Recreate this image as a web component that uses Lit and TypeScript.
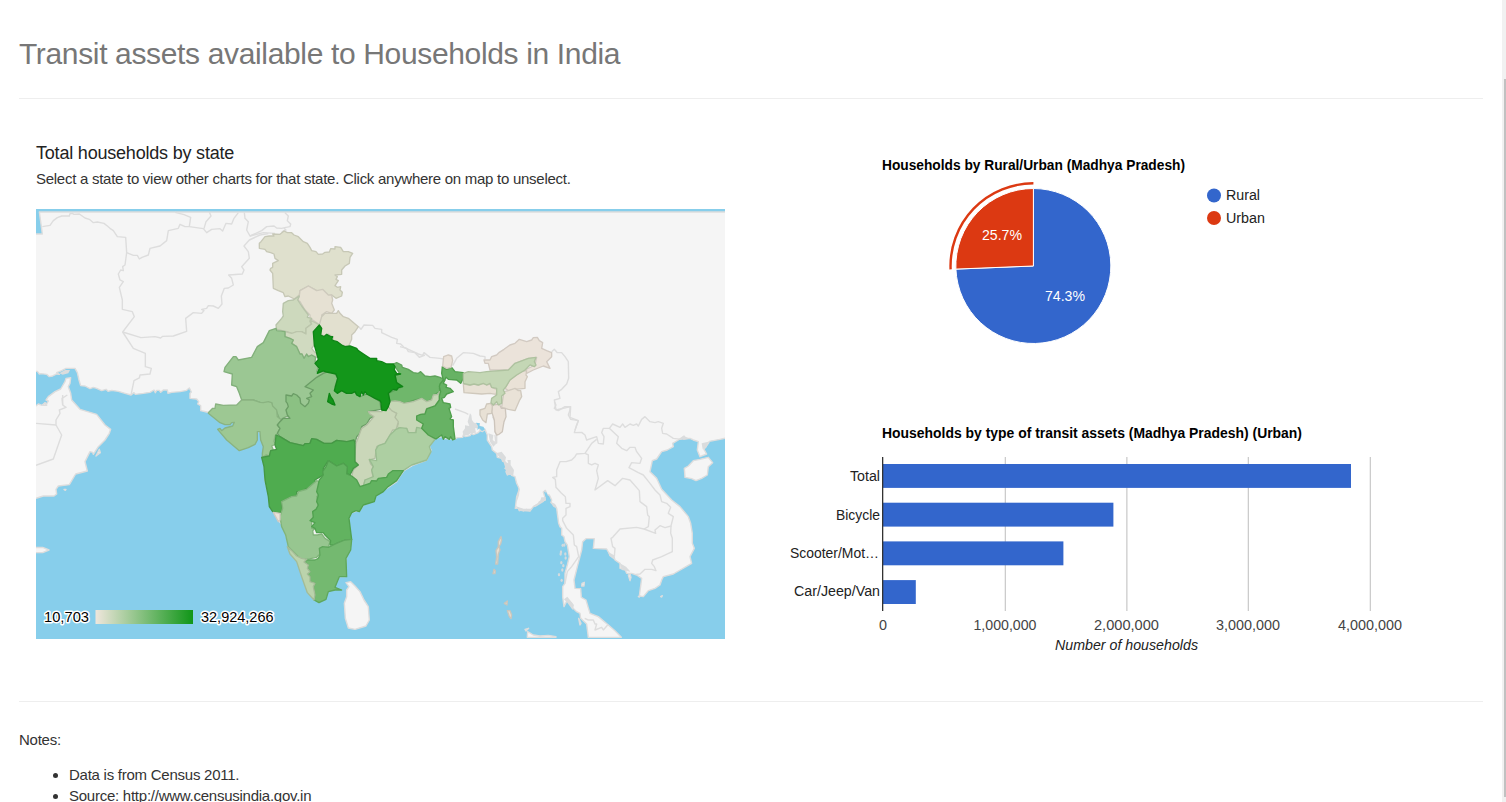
import { LitElement, html, svg, css } from "lit";
import { customElement } from "lit/decorators.js";

// Survey sheets the outlines are recorded on: each has its own origin, in map units (3 per pixel).
const SHEETS: Record<string, [number, number]> = {
  A: [90, 600],
  T: [600, 600],
  N: [600, 660],
  E: [1200, 960],
  S: [600, 1200],
  I: [1440, 1200],
  W: [90, 1200],
};

// "N 10,20 30,40 S 5,6" -> polyline path data; a letter switches the sheet.
function outline(src: string, close = false): string {
  let origin = SHEETS.A;
  const pts: string[] = [];
  for (const token of src.trim().split(/\s+/)) {
    if (SHEETS[token]) {
      origin = SHEETS[token];
      continue;
    }
    const [x, y] = token.split(",").map(Number);
    pts.push(`${x + origin[0]} ${y + origin[1]}`);
  }
  return "M" + pts.join("L") + (close ? "Z" : "");
}

const LAND = [
  // Eurasian mainland
  `A 28,36 37,102 10,102 10,514 22,514 28,522 34,521 50,523 58,530 68,528 80,522 88,523 80,518 95,512 108,505 135,505 142,518 147,540 152,557 165,558 180,566 190,562 200,565 215,572 228,568 234,574 245,571 265,574 285,580 303,585 312,578 316,583 340,580 360,577 372,570 376,578 380,571 388,571 392,577 400,570 412,570 414,580 425,577 450,575 470,571 478,564 482,572 484,576 480,580 480,595 500,597 506,605 503,612 512,617 512,632 530,636 545,640
   S 60,60 100,60 120,75 100,90 120,140 160,125 170,95 180,95 192,140 195,240 215,320 235,360 250,380 268,440 300,490 330,575 357,600 378,590 385,570 405,555 418,530 435,530 438,475 450,450 450,418 447,350 455,338 480,330 490,315 520,303 528,285 560,265 590,245 600,228 612,212 640,195 680,180 693,150 688,140
   E 95,362 105,355 127,350 135,356 165,357 172,353 188,352 190,345 196,350 210,347 215,340 220,344 235,338 240,332 247,335 255,328 262,345 262,360 275,380 277,390 290,400 292,412 305,415 308,424 315,425 322,440 315,445 325,450 318,455 322,465 332,460 335,466 345,470 350,490 357,505 355,525 350,540
   I 118,268 110,290 106,325 115,325 118,332 125,327 130,333 140,328 150,333 160,320 175,312 178,305 196,300 194,290 190,276 196,271 202,285 208,285 215,300 213,308 225,315 230,325 236,370 240,380 245,385 245,405 252,410 255,425 262,435 268,470 262,495 255,520 255,550 248,560 248,590 252,620 262,600 275,610 275,620 290,635 300,640 302,655 320,672 325,712 424,712 405,692 385,675 355,650 330,640 318,600 304,592 302,566 285,565 282,540 292,500 305,450 308,425 318,416 343,416 340,445 380,447 390,465 402,470 405,480 420,490 420,505 435,508 440,520 455,520 470,525 485,535 478,588 490,590 505,572 525,565 540,555 545,540 550,530 580,522 635,490 630,470 643,445 637,430 637,400 632,370 625,350 600,320 575,300 545,268 530,235 517,222 510,215 517,182 530,177 545,155 562,150 580,140 578,130 595,120 612,108 615,116 630,115 640,120 655,125 652,150 660,170 680,162 672,148 685,130 688,124 720,118 745,113 T 1585,36`,
  // Arabian peninsula
  `A 10,624 25,612 36,616 45,608 50,612 55,603 48,600 55,590 75,575 92,567 105,545 108,535 122,533 120,550 115,560 122,580 W 125,0 150,28 200,43 225,75 242,88 238,100 225,120 205,140 190,163 188,157 180,155 165,185 172,213 137,222 118,254 85,258 78,268 80,282 72,288 40,288 18,295 10,297`,
  // Islands
  "S 438,548 452,545 465,558 480,575 492,600 505,620 508,660 498,678 465,688 445,684 436,655 433,610 440,590 440,570 447,560",
  "I 613,205 625,198 640,182 660,178 685,172 698,188 685,200 682,225 665,235 648,242 635,236 615,232",
  "I 143,695 160,705 180,708 205,706 228,710 228,712 142,712",
  "W 10,443 38,442 57,450 38,458 10,458",
  "W 198,168 208,148 211,158",
  "W 102,268 108,268 106,271",
  "A 38,616 44,610 50,616",
  "I 445,525 450,522 453,532 450,542",
  "I 306,550 313,547 312,558 305,558",
  "I 475,590 480,588 478,591",
  "I 542,590 547,587 545,591",
  "I 296,655 303,670 300,675",
  "I 135,688 146,685 138,693",
];

// River deltas and broken shoreline
const DELTAS = [
  "E 210,280 214,285 216,300 222,308 232,310 250,325 240,332 236,325 225,325 228,338 212,340 205,345 190,347 188,335 195,325 195,316 208,318 203,305",
  "E 288,400 305,395 318,412 315,425 325,430 322,420 332,420 332,435 342,450 340,465 322,465 318,455 315,440 310,425",
  "E 265,340 280,345 278,360 290,370 280,380 270,365",
  "I 106,318 130,326 155,326 150,335 118,333",
  "I 160,318 180,305 184,292 198,292 192,305 165,322",
  "I 598,118 612,108 630,116 612,120",
  "I 665,130 685,125 680,142 668,148",
  "I 210,305 225,312 228,325 220,320",
  "A 88,520 105,510 120,510 115,520 98,524",
  "I 384,455 402,466 404,480 388,468",
  "I 420,490 438,500 452,515 425,510",
  "I 252,598 262,590 282,615 278,630 262,608",
];

const ISLETS = [
  [243, 456], [248, 436], [244, 488], [257, 474], [250, 497], [237, 524], [247, 510], [245, 541], [256, 462], [242, 462], [253, 435],
];

const BORDERS = [
  "A 37,80 60,76 70,62 82,53 95,48 118,48 120,41 127,40 132,43 148,42 165,54 178,58 190,68 202,66 222,70 232,78 240,85 250,92 262,110 287,112 290,158 310,166 322,166 328,177 336,172 355,165 360,145 390,138 410,122 415,92 445,85 450,73 465,80 478,80 520,86 530,98 545,88 570,86 578,93 588,70 605,72 612,55 625,38",
  "A 478,80 482,52 462,44 436,37",
  "A 522,86 528,65 543,48 538,36",
  "A 290,158 285,195 278,200 280,212 272,210 265,222 270,240 280,245 268,262 277,300 277,328 307,335 313,350 278,396 333,413 375,410 392,414 398,409 430,408 470,394 467,355 490,338 515,340 522,332 515,328 530,325 535,317 550,318 565,325 576,312 574,288 583,265 595,264 610,255 605,235 596,225 637,222 642,210 635,200 658,175 655,155 642,138 658,120 690,105 715,101",
  "A 278,396 310,445 346,460 346,500 364,505 360,522 330,525 328,534 312,542 303,585",
  "T 133,38 135,55 145,65 140,90 150,108 185,92 200,80 222,78 230,84 245,85 258,82 270,80 272,72 262,62 265,48 255,38",
  "T 245,96 258,90 252,85",
  "T 150,108 190,98 225,100",
  "A 98,585 98,600 W 98,15 108,22 88,30 90,40 78,60 78,75 95,105 70,177 18,196",
  "W 98,15 96,-5 112,-15",
  "W 18,70 78,75",
  "N 476,320 483,328 492,315 518,316 525,325 545,328 545,338 575,352 592,358 590,370 602,372 612,382 655,402 668,406 672,398 690,412 720,415 E 130,117",
  "E 0,80 20,85 25,95 45,98 58,112 75,105",
  "E 158,137 170,115 190,98 220,100 240,108 255,110 255,118",
  "E 455,95 463,88 472,98 485,98 495,110 505,125 506,175 500,192 485,208 475,215 480,235 463,240 468,270 512,260 510,292 535,302 525,330",
  "I 223,5 228,15 223,25 235,32 255,20 270,20 270,30 265,45 272,58 295,62 290,75 283,98 305,97 315,105 320,120 350,110 355,130 370,132 372,110 365,98 370,85 388,85 398,72 420,82 428,72 435,82 450,72 460,76 470,72 475,78 480,68 485,58 495,50 510,65 525,68 535,65 550,70 545,85 548,100 560,102 580,115 605,118",
  "E 165,267 195,278 205,283",
  "E 278,290 288,310 285,335 290,345 290,370",
  "I 45,105 48,130 35,122",
  "I 350,118 335,130 315,160 290,162 285,170 275,180 258,185 240,185 230,210 230,230 218,232 226,238 228,262 243,278 256,290 258,310 270,310 270,320 258,325 258,345 248,355 248,362 260,385 280,405 283,435 290,440 296,470 275,500 262,515 255,550",
  "I 315,160 325,165 325,190 335,195 345,190 355,195 350,212 355,235 345,270 383,242 405,257 428,235 450,240 478,272 480,305 500,320 503,345 508,350 505,380 492,387",
  "I 388,85 415,110 410,130 425,145 440,152 450,142 465,142 470,155 485,175 480,190 455,188 447,203 475,218 490,225 510,250 525,270 540,285 545,305 560,310 572,322 565,340 580,350 573,378 555,383 540,377 525,390 527,400 492,387 470,382 420,387 398,412 393,415 398,440 405,445 403,470",
  "I 573,378 572,400 577,415 577,455 545,470 518,480 515,490 523,500 528,512 515,508 495,508 480,522 468,523",
  "I 314,655 325,660 340,660 345,672 350,672 345,690 365,682 370,690 383,675",
];

type Region = { name: string; fill: string; edge: string; d: string };

const STATES: Region[] = [
  { name: "Jammu and Kashmir", fill: "#dfe0cd", edge: "#c7c8b6", d: "N 178,70 183,65 195,50 208,48 222,48 218,42 240,43 252,33 262,38 275,38 282,45 295,50 310,65 322,70 330,82 335,92 348,95 355,103 368,102 375,97 388,96 392,86 405,87 405,80 422,82 430,95 445,95 458,100 450,112 448,130 435,138 425,150 425,163 405,165 412,170 408,178 415,182 405,197 412,202 422,200 420,210 427,217 425,228 408,235 395,225 385,228 368,212 350,212 325,198 300,212 298,225 283,237 265,228 255,230 250,218 235,212 220,205 218,160 210,150 212,145 218,142 218,130 235,122 225,115 222,102 212,98 200,95 195,88 178,85" },
  { name: "Himachal Pradesh", fill: "#e6e1d3", edge: "#cecabd", d: "N 300,212 325,198 350,212 368,208 385,225 395,225 398,240 395,250 403,270 395,280 380,275 365,285 368,298 360,315 345,305 330,295 330,285 315,270 300,245 293,240 298,228" },
  { name: "Punjab", fill: "#cdd9bd", edge: "#b7c3a9", d: "N 250,250 265,242 280,240 298,228 293,240 305,258 325,285 322,292 335,295 330,305 335,312 318,325 318,342 305,335 290,335 280,342 260,335 230,328 228,315 245,295 250,288 248,275" },
  { name: "Haryana", fill: "#d0dac0", edge: "#bbc5ab", d: "N 255,335 275,340 290,335 305,335 318,342 318,325 335,312 330,300 350,310 358,315 340,335 343,375 335,385 345,398 350,400 350,412 335,405 325,410 320,402 312,415 306,402 300,402 290,380 275,370 280,360 270,355 255,350" },
  { name: "Rajasthan", fill: "#9bc793", edge: "#82b07b", d: "N 208,332 228,325 230,332 255,335 255,350 270,355 280,360 275,370 290,380 300,402 306,402 312,415 320,402 325,410 335,405 347,412 345,425 355,440 350,455 380,458 360,475 345,500 355,530 335,570 290,575 275,590 258,590 240,600 230,575 220,572 215,548 200,550 190,552 180,547 160,540 125,540 118,520 110,500 95,495 97,462 72,455 75,442 100,410 108,410 115,420 155,412 172,380 190,368" },
  { name: "Gujarat", fill: "#9dc893", edge: "#8ab381", d: "N 25,578 38,565 45,565 47,552 70,556 110,555 125,540 160,540 180,547 190,548 205,545 215,548 218,558 230,570 232,590 245,600 232,615 240,625 S 232,102 225,108 222,125 228,132 215,138 220,150 212,152 208,168 198,165 187,172 187,160 190,140 182,120 180,95 172,95 172,120 165,133 145,143 118,152 80,120 53,88 60,85 65,92 75,84 98,78 103,67 95,68 90,74 75,74 60,68 25,40" },
  { name: "Madhya Pradesh", fill: "#8bc183", edge: "#6b9d66", d: "N 315,500 350,472 370,460 385,455 405,460 413,475 405,500 410,515 425,512 440,520 465,515 480,530 500,522 525,535 540,545 543,568 505,575 522,590 510,595 500,612 485,620 480,640 470,650 465,670 S 440,125 410,121 395,130 372,130 350,118 335,116 330,130 315,131 310,137 270,128 240,110 232,100 240,85 232,75 240,65 N 250,595 270,595 262,585 258,570 265,560 262,550 258,545 258,525 275,528 280,521 290,525 300,535 302,550 315,560 325,550 328,540 320,535 335,530 330,520 340,510" },
  { name: "Uttarakhand", fill: "#e2e0cf", edge: "#cac8b9", d: "N 365,290 375,280 410,280 415,272 420,280 430,290 445,295 475,320 465,335 455,345 455,358 445,380 425,375 400,360 398,350 385,342 370,348 362,340 365,325 358,315" },
  { name: "Bihar", fill: "#6fb76b", edge: "#5fa35b", d: "N 580,432 590,428 605,435 607,442 625,448 640,458 655,460 662,455 675,468 690,470 705,468 720,472 E 135,180 118,205 120,215 100,225 95,238 80,245 65,235 45,240 15,250 N 600,545 570,545 565,520 608,500 590,488 585,465 600,462" },
  { name: "Jharkhand", fill: "#c6d7b6", edge: "#b0c1a1", d: "N 570,545 585,543 600,545 612,550 640,545 665,535 680,545 695,540 700,525 715,523 718,515 E 118,215 118,240 105,258 80,265 75,280 50,288 55,302 70,310 68,320 82,332 65,328 50,325 45,340 25,338 20,325 0,328 N 592,620 595,610 583,602 585,592 590,580 575,575 562,558" },
  { name: "Chhattisgarh", fill: "#cad7b9", edge: "#b3bfa3", d: "S 505,35 545,35 562,18 575,32 590,40 585,52 595,65 588,90 578,90 570,105 555,130 530,140 525,175 508,180 512,192 520,200 515,210 520,235 495,240 490,258 478,260 470,240 455,228 460,210 475,195 463,180 468,130 472,120 485,85 500,75 522,50 510,42" },
  { name: "Odisha", fill: "#adcfa2", edge: "#9abd90", d: "S 588,88 600,83 620,85 625,98 648,98 650,82 665,85 685,90 685,105 705,118 688,140 693,155 680,180 635,195 605,215 580,212 560,232 530,240 510,250 490,260 495,240 520,230 515,210 520,200 508,178 530,182 527,150 535,137 555,130 570,105" },
  { name: "West Bengal", fill: "#67b264", edge: "#4f9f4c", d: "E 127,140 140,148 155,142 165,155 190,158 190,175 182,190 170,180 145,178 138,172 130,190 140,195 138,202 150,205 160,215 140,222 133,232 125,235 130,248 150,252 152,262 147,265 155,290 150,297 160,300 160,320 165,357 158,360 152,350 148,358 135,350 130,358 125,345 108,357 85,345 65,325 70,312 50,300 50,288 62,283 75,282 80,267 105,258 118,240 118,228 122,215 118,200 120,192 130,180 125,160" },
  { name: "Maharashtra", fill: "#4fac4f", edge: "#459845", d: "S 228,105 240,110 270,128 310,137 315,131 330,130 335,116 350,118 372,130 395,130 410,121 440,125 462,120 465,130 465,165 465,185 475,195 460,205 450,225 440,220 442,200 430,190 410,198 385,182 370,205 370,225 345,240 345,250 335,260 315,268 315,275 290,275 290,288 275,290 255,300 245,305 245,318 248,325 245,335 235,340 218,335 208,320 205,290 195,240 192,200 185,172 208,168 212,152 230,148 225,135" },
  { name: "Karnataka", fill: "#97c690", edge: "#81b47a", d: "S 350,242 358,245 355,265 358,285 350,290 352,305 355,325 338,335 342,345 335,365 335,385 345,385 338,392 340,405 352,405 365,402 375,415 390,425 385,440 360,445 360,462 350,472 320,478 300,475 265,440 257,405 245,380 240,350 248,325 245,305 275,290 290,288 295,275 320,268" },
  { name: "Andhra Pradesh", fill: "#62b360", edge: "#50a14f", d: "S 385,182 410,198 430,190 442,200 440,222 455,228 470,240 480,260 510,250 515,242 530,243 535,235 560,232 565,222 578,212 610,212 590,242 562,262 550,275 528,288 523,305 490,315 478,335 468,332 455,338 447,355 455,418 435,420 415,428 400,435 390,435 392,422 375,405 370,398 350,398 345,385 335,380 345,368 330,362 340,352 338,335 348,328 355,315 350,305 355,285 350,275 358,240 370,225 368,215 378,200" },
  { name: "Tamil Nadu", fill: "#74b970", edge: "#5ea75c", d: "S 455,418 452,450 438,475 440,530 418,530 405,562 425,570 405,570 385,575 378,598 357,608 342,600 345,585 340,560 345,550 330,545 330,530 322,522 330,515 322,505 325,495 312,485 325,480 345,480 355,475 360,465 358,445 368,440 385,442 400,435 415,428 435,420" },
  { name: "Kerala", fill: "#bbd3ac", edge: "#a4bc97", d: "S 262,440 275,452 290,468 305,475 320,478 312,486 325,495 322,505 330,515 322,522 330,530 330,545 345,550 340,560 345,585 342,600 322,578 305,530 290,485 270,462" },
  { name: "Goa", fill: "#ece3d9", edge: "#d2cac1", d: "S 220,337 240,340 240,360 235,365" },
  { name: "Sikkim", fill: "#ece3d9", edge: "#d3cbc1", d: "E 131,110 145,105 155,108 158,122 153,142 140,145 128,138" },
  { name: "Arunachal Pradesh", fill: "#ebe3da", edge: "#d2cac2", d: "E 252,120 270,120 275,110 290,105 298,97 312,88 330,75 345,70 358,58 380,65 395,60 400,53 412,52 418,62 428,68 425,85 440,92 455,98 455,110 440,125 450,145 430,138 400,150 380,160 375,150 405,135 410,112 385,115 345,130 325,150 270,150 265,130 255,130" },
  { name: "Nagaland", fill: "#eae2d7", edge: "#d1c9be", d: "E 380,152 378,165 382,170 375,185 375,205 345,208 325,212 315,205 330,180 350,165 365,155" },
  { name: "Manipur", fill: "#e9e2d7", edge: "#d0c9be", d: "E 325,212 345,205 355,212 362,212 365,230 358,242 345,272 325,268 305,262 308,240 312,215" },
  { name: "Mizoram", fill: "#ebe3da", edge: "#cdc5bc", d: "E 278,255 298,252 304,265 316,265 318,290 312,305 307,335 297,343 290,345 285,335 283,300 275,275" },
  { name: "Tripura", fill: "#e8e1d5", edge: "#cfc8bd", d: "E 240,270 255,265 260,252 272,250 277,258 275,280 262,282 258,308 248,300 240,285" },
  { name: "Meghalaya", fill: "#e8e1d5", edge: "#cfc8bc", d: "E 190,192 210,195 222,192 235,195 250,190 260,195 270,192 275,202 290,208 290,215 288,223 270,220 245,222 192,218" },
  { name: "Assam", fill: "#c4d7b5", edge: "#aec29f", d: "E 190,160 205,155 240,158 260,155 325,150 345,130 385,115 408,112 403,125 408,135 403,140 390,135 375,150 350,165 330,180 318,200 310,210 315,220 305,228 305,250 295,255 290,245 280,255 273,248 275,235 290,225 290,205 275,202 270,190 260,195 250,190 235,195 222,192 210,195 190,190" },
  { name: "Uttar Pradesh", fill: "#13961a", edge: "#0e8515", d: "N 358,315 365,325 362,345 372,350 380,343 392,350 398,350 395,358 400,362 412,365 425,375 435,380 450,378 470,385 475,392 495,405 510,415 530,415 530,422 545,425 560,432 580,432 585,440 583,450 590,460 602,462 585,465 590,488 608,500 595,503 590,510 580,508 565,520 570,545 565,560 558,572 545,570 543,548 540,542 525,535 512,528 500,522 495,515 490,525 485,515 480,530 470,525 465,515 455,520 440,520 425,512 412,520 403,512 413,475 408,462 380,456 370,453 352,460 358,445 345,430 355,418 350,400 343,375 340,335" },
  { name: "Lalitpur", fill: "#13961a", edge: "#0e8515", d: "N 388,520 392,530 398,538 405,555 395,552 383,545 385,535" },
  { name: "Andaman", fill: "#e6ded0", edge: "#c9c6bd", d: "I 63,410 65,420 62,432 57,440 60,450 55,462 53,492 47,492 50,470 48,452 55,440 55,425" },
  { name: "Little Andaman", fill: "#e6ded0", edge: "#c9c6bd", d: "I 42,508 46,512 45,521 39,521" },
  { name: "Nicobar", fill: "#e6ded0", edge: "#c9c6bd", d: "I 82,632 90,632 95,645 93,656 88,650" },
  { name: "Katchal", fill: "#e6ded0", edge: "#c9c6bd", d: "I 73,610 82,603 81,615" },
];

const BARS = [
  { label: "Total", x: 850, len: 30, y: 464, end: 1351, ty: 481 },
  { label: "Bicycle", x: 836, len: 44, y: 502.7, end: 1113.4, ty: 520 },
  { label: "Scooter/Mot…", x: 790, len: 89, y: 541.4, end: 1063.4, ty: 558 },
  { label: "Car/Jeep/Van", x: 794, len: 86, y: 580.1, end: 915.8, ty: 596 },
];

const TICKS = [
  { label: "0", x: 883, len: 8 },
  { label: "1,000,000", x: 1005, len: 63 },
  { label: "2,000,000", x: 1126.5, len: 65 },
  { label: "3,000,000", x: 1248, len: 64 },
  { label: "4,000,000", x: 1370, len: 64 },
];

@customElement("households-map")
export class HouseholdsMap extends LitElement {
  static styles = css`
    :host { display: block; width: 689px; height: 430px; }
    svg { display: block; }
    .land { fill: #f5f5f5; stroke: #dddddd; stroke-width: 4.2; stroke-linejoin: round; }
    .delta { fill: #dadcdd; }
    .islet { fill: #d3dade; }
    .border { fill: none; stroke: #dddddd; stroke-width: 4.2; stroke-linejoin: round; }
    .state { stroke-width: 4; stroke-linejoin: round; }
    .scale { font: 14.6px "Liberation Sans", Arial, sans-serif; fill: #000; stroke: #fff; stroke-width: 3px; paint-order: stroke; stroke-linejoin: round; }
  `;

  render() {
    return html`<svg width="689" height="430" viewBox="36 209 689 430">
      <defs>
        <linearGradient id="ramp"><stop offset="0" stop-color="#efe6dc"></stop><stop offset="1" stop-color="#109618"></stop></linearGradient>
      </defs>
      <rect x="36" y="209" width="689" height="430" fill="#87ceeb"></rect>
      <g transform="scale(.33333)">
        ${LAND.map((d) => svg`<path class="land" d=${outline(d, true)}></path>`)}
        ${DELTAS.map((d) => svg`<path class="delta" d=${outline(d, true)}></path>`)}
        ${ISLETS.map(([x, y]) => svg`<ellipse class="islet" cx=${x + 1440} cy=${y + 1200} rx="3.5" ry="5"></ellipse>`)}
        ${BORDERS.map((d) => svg`<path class="border" d=${outline(d)}></path>`)}
        ${STATES.map((s) => svg`<path class="state" fill=${s.fill} stroke=${s.edge} d=${outline(s.d, true)}></path>`)}
        <path fill="#87ceeb" d=${outline("E 228,308 240,310 238,318 250,320 255,328 246,334 238,325 232,330 234,318", true)}></path>
        <path fill="#87ceeb" d=${outline("I 198,275 203,285 206,300 198,300", true)}></path>
      </g>
      <text class="scale" x="44" y="622" textLength="45" lengthAdjust="spacingAndGlyphs">10,703</text>
      <rect x="95.5" y="610" width="97.5" height="14" fill="url(#ramp)"></rect>
      <text class="scale" x="201" y="622" textLength="72.5" lengthAdjust="spacingAndGlyphs">32,924,266</text>
    </svg>`;
  }
}

@customElement("area-pie")
export class AreaPie extends LitElement {
  static styles = css`
    :host { display: block; }
    svg { display: block; font: 14px "Liberation Sans", Arial, sans-serif; }
    .title { font-weight: bold; fill: #000; }
    .share { fill: #fff; }
    .key { fill: #222; }
  `;

  render() {
    return html`<svg width="700" height="210" viewBox="782 150 700 210">
      <text class="title" x="882" y="170" textLength="303" lengthAdjust="spacingAndGlyphs">Households by Rural/Urban (Madhya Pradesh)</text>
      <path fill="#3366cc" stroke="#fff" d="M1033.4 266V188.5A77.5 77.5 0 1 1 955.9 269.1Z"></path>
      <path fill="#dc3912" stroke="#fff" d="M1033.4 266L955.9 269.1A77.5 77.5 0 0 1 1033.4 188.5Z"></path>
      <path fill="none" stroke="#dc3912" stroke-width="2.4" d="M950.6 269.4A82.8 82.8 0 0 1 1033.4 183.3"></path>
      <text class="share" x="982" y="240" textLength="40" lengthAdjust="spacingAndGlyphs">25.7%</text>
      <text class="share" x="1045" y="301" textLength="40" lengthAdjust="spacingAndGlyphs">74.3%</text>
      <circle cx="1214" cy="195.5" r="7" fill="#3366cc"></circle>
      <circle cx="1214" cy="218" r="7" fill="#dc3912"></circle>
      <text class="key" x="1226" y="200" textLength="34" lengthAdjust="spacingAndGlyphs">Rural</text>
      <text class="key" x="1226" y="223" textLength="39" lengthAdjust="spacingAndGlyphs">Urban</text>
    </svg>`;
  }
}

@customElement("asset-bars")
export class AssetBars extends LitElement {
  static styles = css`
    :host { display: block; }
    svg { display: block; font: 14px "Liberation Sans", Arial, sans-serif; }
    .title { font-weight: bold; fill: #000; }
    .label { fill: #222; }
    .tick { fill: #444; text-anchor: middle; }
    .axis { fill: #222; font-style: italic; }
  `;

  render() {
    return html`<svg width="700" height="250" viewBox="782 418 700 250">
      <text class="title" x="882" y="438" textLength="420" lengthAdjust="spacingAndGlyphs">Households by type of transit assets (Madhya Pradesh) (Urban)</text>
      ${TICKS.slice(1).map((t) => svg`<rect x=${t.x - 0.3} y="457" width="1.3" height="154" fill="#ccc"></rect>`)}
      ${BARS.map((b) => svg`<rect x="883" y=${b.y} width=${b.end - 883} height="23.9" fill="#3366cc"></rect>
        <text class="label" x=${b.x} y=${b.ty} textLength=${b.len} lengthAdjust="spacingAndGlyphs">${b.label}</text>`)}
      <rect x="882" y="457" width="1.3" height="154" fill="#333"></rect>
      ${TICKS.map((t) => svg`<text class="tick" x=${t.x} y="630" textLength=${t.len} lengthAdjust="spacingAndGlyphs">${t.label}</text>`)}
      <text class="axis" x="1055" y="650" textLength="143" lengthAdjust="spacingAndGlyphs">Number of households</text>
    </svg>`;
  }
}

@customElement("app-root")
export class AppRoot extends LitElement {
  static styles = css`
    :host {
      display: grid; grid-template-columns: 1fr 4px; height: 802px; overflow: hidden; background: #fff;
      font: 15px/21px "Liberation Sans", Arial, sans-serif; color: #333;
    }
    .page { padding-left: 19px; height: 802px; overflow: hidden; box-sizing: border-box; }
    .heading { margin: 0; padding-top: 34px; height: 64px; font-size: 30px; line-height: 40px; font-weight: normal; letter-spacing: -0.35px; color: #777; white-space: nowrap; }
    .rule { width: 1464px; height: 1px; background: #eee; }
    .board { display: flex; height: 602px; }
    .mapcol { width: 763px; padding: 43px 0 0 17px; box-sizing: border-box; flex: none; white-space: nowrap; }
    .subtitle { margin: 0; font-size: 18px; line-height: 22px; font-weight: normal; letter-spacing: -0.2px; color: #222; }
    .hint { margin: 4px 0 20px; font-size: 15px; line-height: 21px; letter-spacing: -0.27px; }
    .charts { padding-top: 51px; display: flex; flex-direction: column; gap: 58px; }
    .notes { padding-top: 27px; letter-spacing: -0.25px; }
    .notes p { margin: 0; }
    .notes ul { margin: 14px 0 0; padding-left: 50px; }
    .notes li { line-height: 21px; }
    .track { background: #f1f1f1; padding: 79px 0 5px 2px; display: flex; box-sizing: border-box; height: 802px; }
    .thumb { flex: 1; background: #c1c1c1; }
  `;

  render() {
    return html`
      <main class="page">
        <h1 class="heading">Transit assets available to Households in India</h1>
        <div class="rule"></div>
        <section class="board">
          <div class="mapcol">
            <h2 class="subtitle">Total households by state</h2>
            <p class="hint">Select a state to view other charts for that state. Click anywhere on map to unselect.</p>
            <households-map></households-map>
          </div>
          <div class="charts">
            <area-pie></area-pie>
            <asset-bars></asset-bars>
          </div>
        </section>
        <div class="rule"></div>
        <section class="notes">
          <p>Notes:</p>
          <ul>
            <li>Data is from Census 2011.</li>
            <li>Source: http://www.censusindia.gov.in</li>
          </ul>
        </section>
      </main>
      <div class="track"><div class="thumb"></div></div>
    `;
  }
}
